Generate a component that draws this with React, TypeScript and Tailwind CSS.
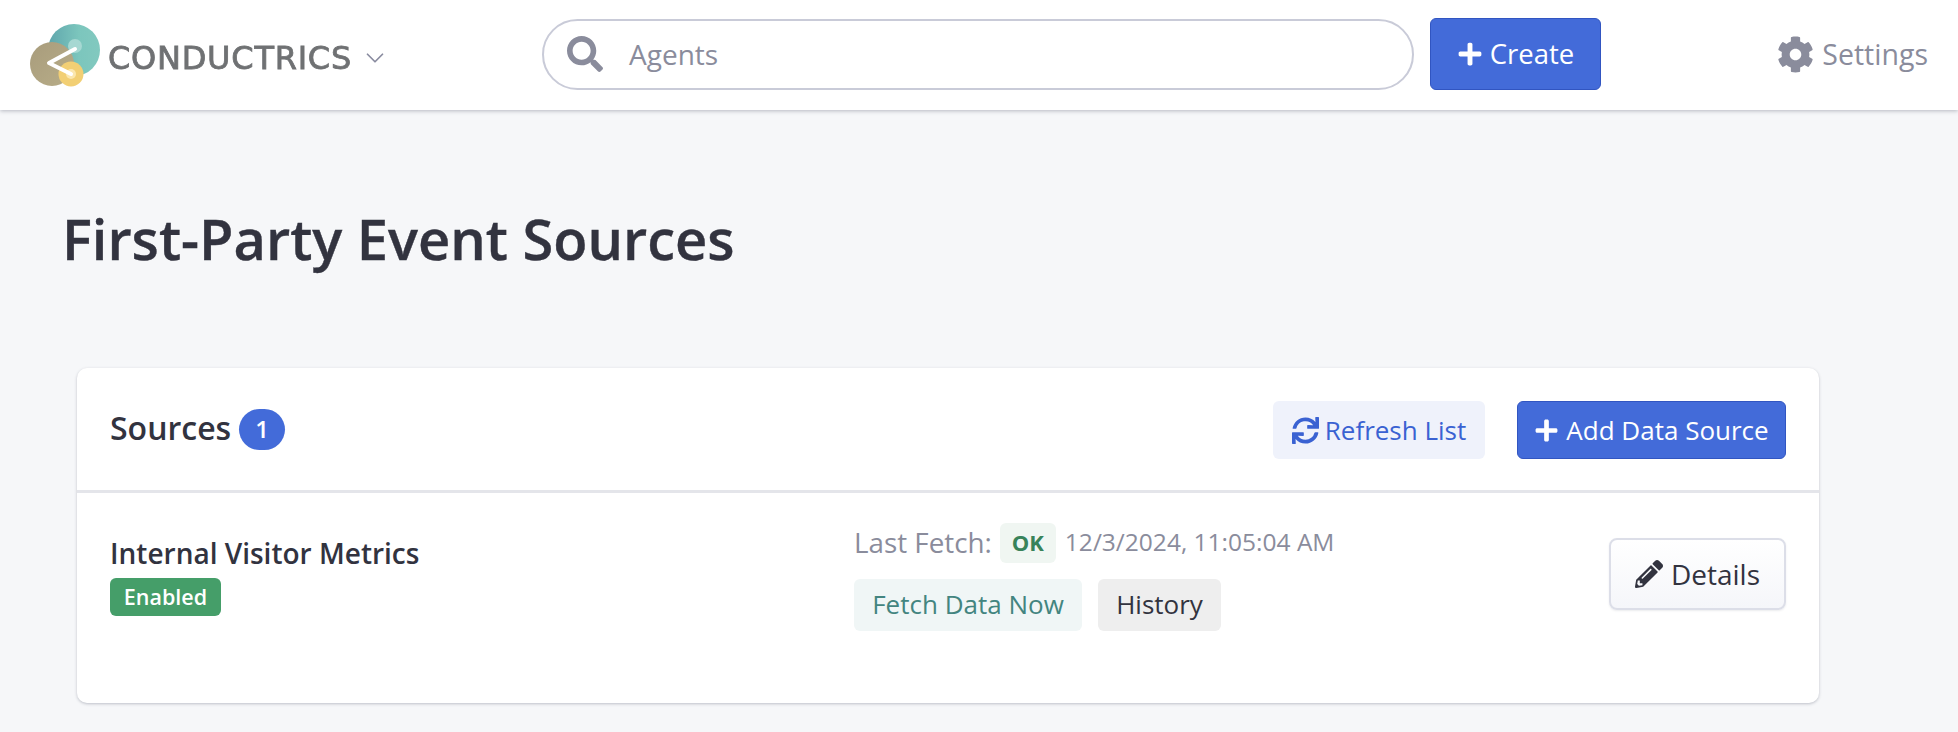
import { FaSearch, FaPlus, FaCog, FaSync, FaPencilAlt } from "react-icons/fa";
import { FiChevronDown } from "react-icons/fi";

function LogoMark() {
  return (
    <svg width="72" height="64" viewBox="0 0 72 64" className="mt-[2px] shrink-0 blur-[0.7px]">
      <defs>
        <linearGradient id="teal" x1="0" y1="0.5" x2="1" y2="0.5">
          <stop offset="0" stopColor="#5fa6ac" />
          <stop offset="0.6" stopColor="#7cc6bd" />
          <stop offset="1" stopColor="#82c9bf" />
        </linearGradient>
        <linearGradient id="olive" x1="0" y1="0" x2="1" y2="1">
          <stop offset="0" stopColor="#a89c7c" />
          <stop offset="1" stopColor="#b8ad88" />
        </linearGradient>
      </defs>
      <circle cx="44" cy="26" r="26" fill="url(#teal)" />
      <circle cx="22" cy="40" r="22" fill="url(#olive)" />
      <circle cx="41" cy="50" r="12.5" fill="#f2cf74" />
      <circle cx="45" cy="22" r="7" fill="#a6d8d2" />
      <circle cx="41" cy="50" r="5" fill="#fbe7ae" />
      <path d="M45 25 L19 39 L41 50" fill="none" stroke="#ffffff" strokeWidth="4" strokeLinecap="round" strokeLinejoin="round" />
    </svg>
  );
}

export default function App() {
  return (
    <div className="min-h-[732px] bg-[#f6f7f9] font-['Open_Sans','Noto_Sans',sans-serif] text-[#32333f]">
      <header className="flex h-[110px] items-center bg-white shadow-[0_1px_4px_rgba(60,65,90,0.35)]">
        <div className="flex w-[542px] shrink-0 items-center pl-[30px]">
          <LogoMark />
          <span className="ml-[6px] mt-[5px] font-['DejaVu_Sans',sans-serif] text-[32px] font-normal tracking-[0.75px] text-[#6f7173] blur-[0.6px] [-webkit-text-stroke:0.8px_#6f7173]">
            CONDUCTRICS
          </span>
          <FiChevronDown strokeWidth={1.4} className="ml-[8px] mt-[6px] text-[30px] text-[#8a8ca0]" />
        </div>
        <div className="mb-[2px] flex h-[71px] w-[872px] shrink-0 items-center rounded-full border-2 border-[#c9cbd8] bg-white pl-[23px] text-[#8a8c9c]">
          <FaSearch className="text-[36px]" />
          <span className="ml-[26px] text-[28px]">Agents</span>
        </div>
        <button className="mb-[2px] ml-[16px] flex h-[72px] w-[171px] shrink-0 items-center justify-center gap-[7px] rounded-md border border-[#3155c1] bg-[#436bd9] text-[27.5px] text-white">
          <FaPlus className="text-[26px]" />
          Create
        </button>
        <div className="mb-[2px] ml-auto mr-[30px] flex items-center gap-[8px] text-[28.5px] text-[#8a8c9c]">
          <FaCog className="text-[37px]" />
          Settings
        </div>
      </header>

      <main className="pl-[62px]">
        <h1 className="pt-[90px] text-[56px] font-semibold leading-[76px] text-[#32333f] [-webkit-text-stroke:0.4px_#32333f]">First-Party Event Sources</h1>

        <section className="ml-[15px] mt-[92px] h-[335px] w-[1742px] rounded-[10px] bg-white shadow-[0_1px_3px_rgba(60,65,90,0.3)]">
          <div className="flex h-[125px] items-center justify-between border-b-[3px] border-[#e4e5ea] pl-[33px] pr-[33px]">
            <div className="mb-[2px] flex items-center gap-[8px]">
              <span className="text-[32px] font-semibold leading-none">Sources</span>
              <span className="mt-[2px] flex h-[41px] w-[46px] items-center justify-center rounded-full bg-[#436bd9] text-[24px] font-semibold text-white">1</span>
            </div>
            <div className="mt-[2px] flex items-center gap-[32px]">
              <button className="flex h-[58px] w-[212px] items-center justify-center gap-[6px] rounded-md bg-[#eff2fb] text-[26px] text-[#3a62d2]">
                <FaSync className="text-[27px]" />
                Refresh List
              </button>
              <button className="flex h-[58px] w-[269px] items-center justify-center gap-[7px] rounded-md border border-[#3155c1] bg-[#436bd9] text-[26px] text-white">
                <FaPlus className="text-[25px]" />
                Add Data Source
              </button>
            </div>
          </div>
          <div className="flex pl-[33px] pr-[33px]">
            <div className="w-[744px] shrink-0 pt-[42px]">
              <div className="text-[28px] font-semibold leading-[36px]">Internal Visitor Metrics</div>
              <span className="mt-[7px] inline-block h-[38px] w-[111px] rounded-md bg-[#459e69] text-center text-[21.5px] font-semibold leading-[38px] text-white">Enabled</span>
            </div>
            <div className="pt-[29px]">
              <div className="flex items-center text-[27.8px] text-[#8a8c9c]">
                Last Fetch:
                <span className="ml-[8px] flex h-[40px] w-[56px] items-center justify-center rounded-md bg-[#f0f6f2] text-[22px] font-bold text-[#38835a]">OK</span>
                <span className="ml-[9px] text-[24.5px]">12/3/2024, 11:05:04 AM</span>
              </div>
              <div className="mt-[15px] flex gap-[16px]">
                <button className="h-[52px] w-[228px] rounded-md bg-[#f0f6f6] text-[26px] text-[#438580]">Fetch Data Now</button>
                <button className="h-[52px] w-[123px] rounded-md bg-[#eeeeee] text-[26px] text-[#32333f]">History</button>
              </div>
            </div>
            <button className="ml-auto mt-[45px] flex h-[72px] w-[177px] items-center justify-center gap-[8px] rounded-lg border-2 border-[#dcdee8] bg-gradient-to-b from-white to-[#f5f6fa] text-[28px] text-[#32333f] shadow-[0_1px_2px_rgba(60,65,90,0.1)]">
              <FaPencilAlt className="text-[28px]" />
              Details
            </button>
          </div>
        </section>
      </main>
    </div>
  );
}
